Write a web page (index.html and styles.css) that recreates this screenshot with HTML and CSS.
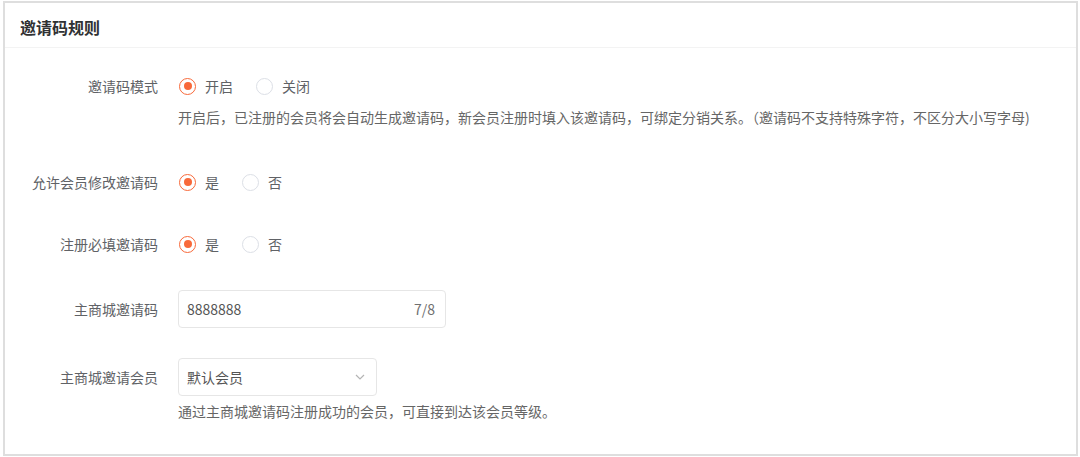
FILE: index.html
```html
<!DOCTYPE html>
<html lang="zh">
<head>
<meta charset="utf-8">
<link rel="stylesheet" href="styles.css">
</head>
<body>
<div class="card">
  <div class="card-header"><span class="title">邀请码规则</span></div>
  <div class="card-body">
    <div class="form-item item-mode">
      <div class="label">邀请码模式</div>
      <div class="content">
        <div class="radios">
          <label class="radio checked"><span class="dot"></span><span class="rtext">开启</span></label>
          <label class="radio"><span class="dot"></span><span class="rtext">关闭</span></label>
        </div>
        <div class="help">开启后，已注册的会员将会自动生成邀请码，新会员注册时填入该邀请码，可绑定分销关系。（邀请码不支持特殊字符，不区分大小写字母)</div>
      </div>
    </div>
    <div class="form-item">
      <div class="label">允许会员修改邀请码</div>
      <div class="content">
        <div class="radios">
          <label class="radio checked"><span class="dot"></span><span class="rtext">是</span></label>
          <label class="radio"><span class="dot"></span><span class="rtext">否</span></label>
        </div>
      </div>
    </div>
    <div class="form-item">
      <div class="label">注册必填邀请码</div>
      <div class="content">
        <div class="radios">
          <label class="radio checked"><span class="dot"></span><span class="rtext">是</span></label>
          <label class="radio"><span class="dot"></span><span class="rtext">否</span></label>
        </div>
      </div>
    </div>
    <div class="form-item item-box">
      <div class="label">主商城邀请码</div>
      <div class="content">
        <div class="input">
          <span class="value">8888888</span>
          <span class="count">7/8</span>
        </div>
      </div>
    </div>
    <div class="form-item item-box last">
      <div class="label">主商城邀请会员</div>
      <div class="content">
        <div class="select">
          <span class="value">默认会员</span>
          <svg class="chev" width="10" height="6" viewBox="0 0 10 6"><path d="M1 1 L5 5 L9 1" fill="none" stroke="#b4b4b4" stroke-width="1.2"/></svg>
        </div>
        <div class="help help-select">通过主商城邀请码注册成功的会员，可直接到达该会员等级。</div>
      </div>
    </div>
  </div>
</div>
</body>
</html>
```

FILE: styles.css
```css
* { box-sizing: border-box; }
html, body { margin: 0; padding: 0; background: #fff; }
body {
  font-family: "Noto Sans CJK SC", "Noto Sans", "Liberation Sans", sans-serif;
  font-size: 14px;
  color: #606266;
}
.card {
  width: 1075px;
  height: 455px;
  margin: 1px 0 0 3px;
  border: 2px solid #dedede;
  background: #fff;
}
.card-header {
  height: 45px;
  padding: 3px 0 0 15px;
  border-bottom: 1px solid #f3f3f3;
  display: flex;
  align-items: center;
}
.title {
  font-size: 16px;
  font-weight: bold;
  color: #303133;
}
.card-body {
  padding-top: 22px;
}
.form-item {
  display: flex;
  margin-bottom: 30px;
}
.item-mode { margin-bottom: 38px; }
.label {
  width: 173px;
  padding-right: 20px;
  text-align: right;
  line-height: 32px;
  color: #606266;
  flex: none;
}
.item-box .label { line-height: 38px; }
.content { flex: 1; }
.radios {
  display: flex;
  height: 32px;
  align-items: center;
}
.radio {
  display: flex;
  align-items: center;
  margin-right: 22px;
  padding-left: 1px;
}
.dot {
  width: 17px;
  height: 17px;
  border-radius: 50%;
  border: 1px solid #dcdfe6;
  background: #fff;
  display: inline-block;
  position: relative;
}
.radio.checked .dot {
  border-color: #f8693a;
}
.radio.checked .dot::after {
  content: "";
  position: absolute;
  left: 3.5px;
  top: 3.5px;
  width: 8px;
  height: 8px;
  border-radius: 50%;
  background: #f8693a;
}
.rtext {
  margin-left: 9px;
  color: #606266;
}
.help {
  margin-top: 4px;
  line-height: 22px;
  color: #666;
  white-space: nowrap;
}
.input, .select {
  height: 38px;
  border: 1px solid #e6e6e6;
  border-radius: 4px;
  display: flex;
  align-items: center;
  justify-content: space-between;
  padding: 0 10px 0 8px;
}
.input { width: 268px; }
.select { width: 199px; padding-right: 11px; }
.value { color: #555; }
.count { color: #707070; }
.chev { display: block; }
.help-select { margin-top: 4px; }
```
